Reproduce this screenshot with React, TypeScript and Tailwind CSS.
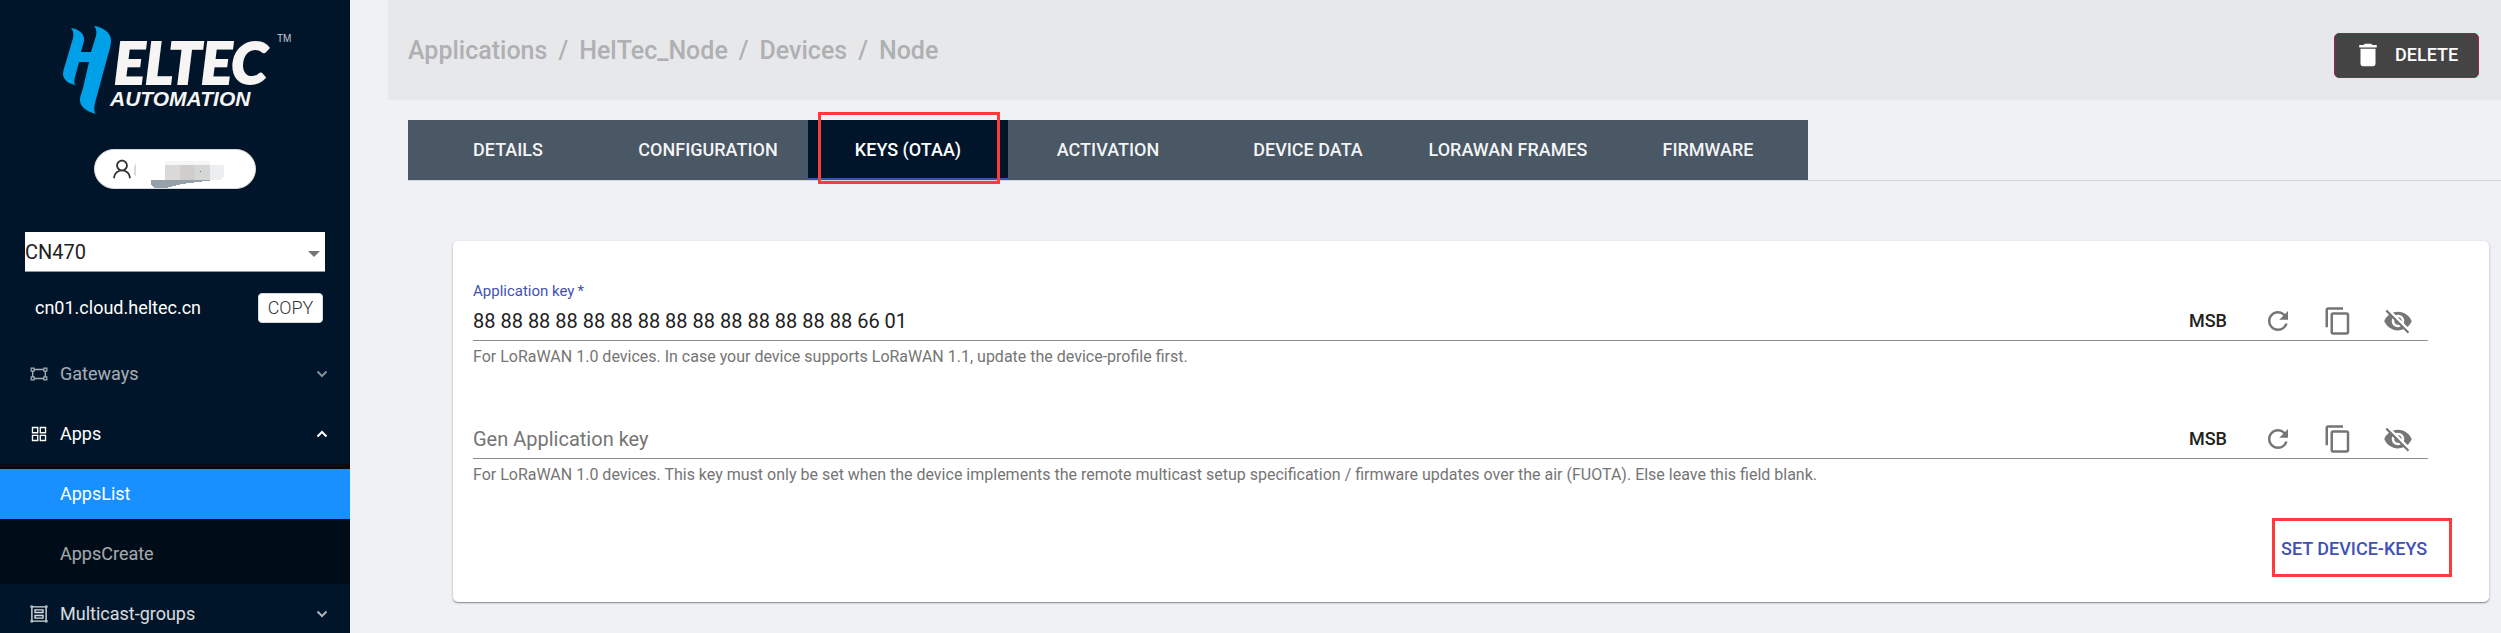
import React, { useState } from "react";
import { MdRefresh, MdContentCopy, MdVisibilityOff, MdDelete } from "react-icons/md";
import {
  AiOutlineUser,
  AiOutlineGateway,
  AiOutlineAppstore,
  AiOutlineGroup,
} from "react-icons/ai";

function Logo() {
  return (
    <svg viewBox="0 0 240 92" className="h-[92px] w-[240px]" role="img" aria-label="Heltec Automation">
      <path
        fill="#00a0e9"
        d="M16 4 C23 5 30 9 29 17 L26 28 L36 28 L41 12 C42 8 41 4 39 2 C48 3 57 9 56 18 C56 22 54 27 53 31 L40 79 C39 84 39 88 41 90 C33 88 24 83 25 75 C25 72 27 68 28 64 L34 38 L24 38 L20 53 C19 57 19 60 21 61 C14 60 8 56 8 50 C8 46 10 42 11 38 L18 14 C19 10 18 6 16 4 Z"
      />
      <text
        x="59"
        y="60"
        fill="#f7f4f4"
        stroke="#f7f4f4"
        strokeWidth="2"
        className="font-['Lato'] text-[58px] font-black italic"
      >
        ELTEC
      </text>
      <text x="55" y="82" fill="#f7f4f4" className="font-['Liberation_Sans'] text-[21px] font-bold italic">
        AUTOMATION
      </text>
      <text x="222" y="18" fill="#c8ccd2" className="font-['Liberation_Sans'] text-[10px]">
        TM
      </text>
    </svg>
  );
}

function Chevron({ up = false }: { up?: boolean }) {
  return (
    <svg
      viewBox="0 0 12 8"
      className={`h-2 w-3 ${up ? "" : "opacity-80"}`}
      fill="none"
      stroke="currentColor"
      strokeWidth="2"
      aria-hidden="true"
    >
      <path d={up ? "M1.5 6.5 L6 2 L10.5 6.5" : "M1.5 1.5 L6 6 L10.5 1.5"} />
    </svg>
  );
}

type MenuTitleProps = {
  icon: React.ReactNode;
  label: string;
  open?: boolean;
  tone: string;
};

function MenuTitle({ icon, label, open = false, tone }: MenuTitleProps) {
  return (
    <button
      type="button"
      aria-expanded={open}
      className={`my-[5px] flex h-[50px] w-full shrink-0 items-center pl-[29px] pr-[22px] text-left text-lg ${tone}`}
    >
      <span className="w-[31px] text-[20px]">{icon}</span>
      <span className="flex-1">{label}</span>
      <Chevron up={open} />
    </button>
  );
}

function Sidebar() {
  return (
    <aside className="flex h-screen w-[350px] shrink-0 flex-col overflow-hidden bg-[#001529]">
      <div className="flex flex-col items-center pt-6">
        <Logo />
        <button
          type="button"
          aria-label="Account"
          className="mt-[33px] flex h-10 w-[162px] items-center rounded-full border border-[#d9d9d9] bg-white pl-[15px] text-[#333]"
        >
          <AiOutlineUser className="size-6" />
          <svg viewBox="0 0 100 40" className="h-10 w-[100px]" shapeRendering="crispEdges" aria-hidden="true">
            <path fill="#d9d9d9" d="M0 18 L2 14 V28 L0 26 Z" />
            <path fill="#f5f7f7" d="M31 12 H76 V16 H31 Z" />
            <path fill="#d9d9d9" d="M31 16 H46 V31 H31 Z" />
            <path fill="#d0cecd" d="M46 16 H61 V31 H46 Z" />
            <path fill="#d5d7d7" d="M61 16 H76 V31 H61 Z" />
            <path fill="#eceef0" d="M76 16 H88 L90 18 V27 L86 31 H76 Z" />
            <path fill="#96a0aa" d="M17 31 H80 L48 35 L32 39 H20 L17 36 Z" />
            <path fill="#2f7fc4" d="M66 22 H67 V23 H66 Z" />
          </svg>
        </button>
      </div>

      <div className="mt-[43px] px-[25px]">
        <div className="relative">
          <select
            aria-label="Region"
            defaultValue="CN470"
            className="h-10 w-full appearance-none rounded-none border-b border-[#949494] bg-white text-xl text-[#212121]"
          >
            <option>CN470</option>
          </select>
          <svg viewBox="0 0 12 6" className="pointer-events-none absolute right-[5px] top-[19px] h-[6px] w-3" aria-hidden="true">
            <path fill="#757575" d="M0 0 H12 L6 6 Z" />
          </svg>
        </div>
      </div>

      <div className="mb-[21px] mt-[21px] flex h-[30px] items-center justify-between pl-[35px] pr-[27px]">
        <span className="text-lg text-white">cn01.cloud.heltec.cn</span>
        <button
          type="button"
          className="h-[30px] w-[65px] rounded-sm border border-[#d9d9d9] bg-white text-lg font-light text-[#333]"
        >
          COPY
        </button>
      </div>

      <nav className="flex flex-col">
        <MenuTitle icon={<AiOutlineGateway />} label="Gateways" tone="text-white/65" />
        <MenuTitle icon={<AiOutlineAppstore />} label="Apps" open tone="text-white" />
        <div className="flex flex-col gap-[10px] bg-[#000c17] py-[5px] text-lg">
          <a href="#apps-list" className="flex h-[50px] items-center bg-[#1890ff] pl-[60px] text-white">
            AppsList
          </a>
          <a href="#apps-create" className="flex h-[50px] items-center pl-[60px] text-white/65">
            AppsCreate
          </a>
        </div>
        <MenuTitle icon={<AiOutlineGroup />} label="Multicast-groups" tone="text-white/85" />
      </nav>
    </aside>
  );
}

const tabs = [
  "DETAILS",
  "CONFIGURATION",
  "KEYS (OTAA)",
  "ACTIVATION",
  "DEVICE DATA",
  "LORAWAN FRAMES",
  "FIRMWARE",
];

function Tabs() {
  const [active, setActive] = useState("KEYS (OTAA)");
  return (
    <div role="tablist" className="flex border-b border-[#d3d4d8]">
      {tabs.map((tab) => (
        <button
          key={tab}
          type="button"
          role="tab"
          aria-selected={tab === active}
          onClick={() => setActive(tab)}
          className={`relative h-[60px] w-[200px] text-lg font-medium ${
            tab === active ? "border-b-2 border-[#3f51b5] bg-[#001529] pt-[2px] text-white" : "bg-[#4a5866] text-white/95"
          }`}
        >
          {tab}
          {tab === "KEYS (OTAA)" && (
            <span className="pointer-events-none absolute -bottom-[6px] -top-2 left-[10px] right-2 border-3 border-[#ff3a3a]" />
          )}
        </button>
      ))}
    </div>
  );
}

type KeyFieldProps = {
  id: string;
  label: string;
  value?: string;
  helper: string;
  required?: boolean;
};

function KeyField({ id, label, value, helper, required = false }: KeyFieldProps) {
  return (
    <div className="flex h-[98px] flex-col">
      <label htmlFor={id} className={`h-5 text-[15px] leading-5 text-[#3f51b5] ${required ? "" : "invisible"}`}>
        {label}&thinsp;*
      </label>
      <div className="flex h-10 items-center border-b border-[#8f8f8f] pr-[15px]">
        <input
          id={id}
          type="text"
          defaultValue={value}
          placeholder={label}
          required={required}
          className="h-full min-w-0 flex-1 bg-transparent text-xl text-[#212121] outline-none placeholder:text-[#757575]"
        />
        <div className="flex items-center text-[#757575]">
          <button type="button" className="mr-9 text-lg font-medium text-[#212121]">
            MSB
          </button>
          <button type="button" aria-label="Generate key" className="mr-[30px]">
            <MdRefresh className="size-[30px]" />
          </button>
          <button type="button" aria-label="Copy key" className="mr-[30px]">
            <MdContentCopy className="size-[30px]" />
          </button>
          <button type="button" aria-label="Toggle visibility">
            <MdVisibilityOff className="size-[30px]" />
          </button>
        </div>
      </div>
      <p className="mt-[6px] text-base leading-5 text-[#757575]">{helper}</p>
    </div>
  );
}

export default function App() {
  return (
    <div className="flex h-screen overflow-hidden bg-[#f0f1f5] font-['Roboto',sans-serif]">
      <Sidebar />
      <main className="min-w-0 flex-1 pl-[38px]">
        <header className="flex h-[100px] items-center justify-between bg-[#e7e8e9] pl-5 pr-[22px]">
          <nav aria-label="Breadcrumb" className="flex gap-[11px] pt-[2px] text-[25px] font-medium leading-8 text-[#afb0b3]">
            <a href="#applications">Applications</a>
            <span>/</span>
            <a href="#heltec-node">HelTec_Node</a>
            <span>/</span>
            <a href="#devices">Devices</a>
            <span>/</span>
            <span>Node</span>
          </nav>
          <button
            type="button"
            className="mt-[10px] flex h-[45px] w-[145px] items-center rounded-[5px] border border-[#a02050] bg-[#444] pl-[18px] text-lg font-medium text-white"
          >
            <MdDelete className="mr-3 size-[30px]" />
            DELETE
          </button>
        </header>
        <div className="pl-5 pt-5">
          <Tabs />
        </div>
        <form
          className="ml-[65px] mr-3 mt-[60px] rounded-[5px] bg-white pb-[25px] pl-5 pr-[37px] pt-10 shadow-[0_1px_3px_rgba(0,0,0,0.2),0_1px_1px_rgba(0,0,0,0.3)]"
          onSubmit={(event) => event.preventDefault()}
        >
          <div className="flex flex-col gap-5 pr-6">
            <KeyField
              id="app-key"
              label="Application key"
              value="88 88 88 88 88 88 88 88 88 88 88 88 88 88 66 01"
              helper="For LoRaWAN 1.0 devices. In case your device supports LoRaWAN 1.1, update the device-profile first."
              required
            />
            <KeyField
              id="gen-app-key"
              label="Gen Application key"
              helper="For LoRaWAN 1.0 devices. This key must only be set when the device implements the remote multicast setup specification / firmware updates over the air (FUOTA). Else leave this field blank."
            />
          </div>
          <div className="mt-[21px] flex justify-end">
            <button
              type="submit"
              className="h-[59px] w-[180px] border-3 border-[#ff3a3a] pl-[6px] pt-[2px] text-left text-lg font-medium text-[#3f51b5]"
            >
              SET DEVICE-KEYS
            </button>
          </div>
        </form>
      </main>
    </div>
  );
}
